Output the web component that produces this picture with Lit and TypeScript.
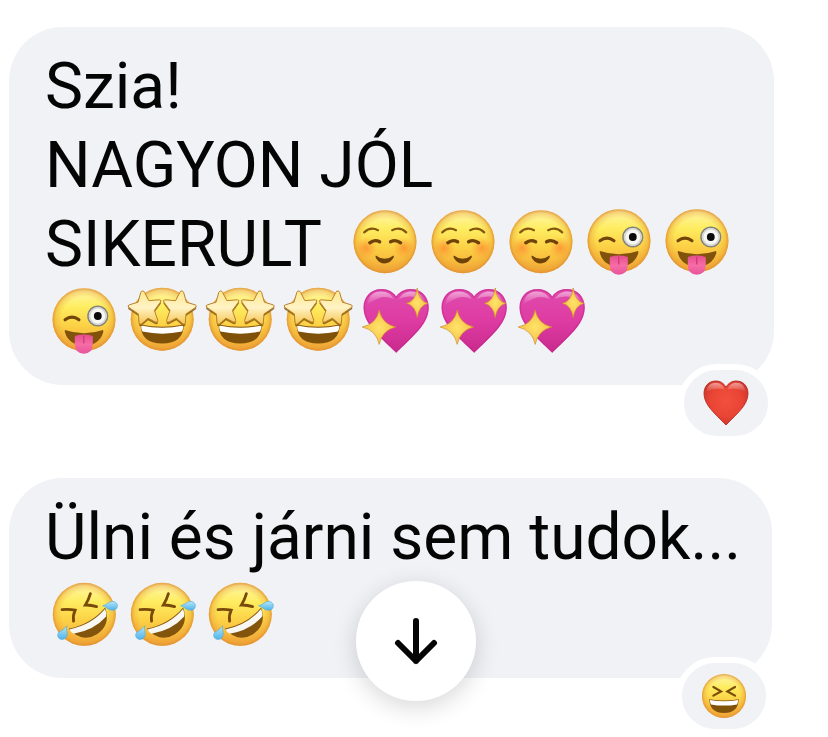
import { LitElement, html, css, svg } from "lit";
import { customElement } from "lit/decorators.js";

const face = (cx: number, cy: number, r: number) => svg`
  <circle cx=${cx} cy=${cy} r=${r} fill="url(#skin)" />
  <circle cx=${cx} cy=${cy} r=${r} fill="url(#rim)" />`;

const star = svg`
  <path d="M19.2 9 Q20.8 8.6 21.6 10.4 L25.8 18.6 L36.4 17.8 Q39 18.2 37.4 20.2 L31.4 28.4 L34.8 38.4 Q34.8 41 32.2 40 L25 36.2 L18.4 42 Q16 43.2 16 40.4 L15.4 32 L5.8 25.4 Q4 23.6 6.4 22.8 L15 20.2 L17.8 10.4 Q18.2 9.2 19.2 9Z"/>`;

const spark = svg`
  <path d="M22.2 28 Q25 42 38.8 45 Q25 48.4 22.2 62.4 Q19.4 48.4 5.2 45 Q19.4 42 22.2 28Z"/>
  <path d="M60.2 6 Q62 19.6 71 21.3 Q62 23.6 60.2 35.6 Q58.4 23.6 49.4 21.3 Q58.4 19.6 60.2 6Z"/>`;

const glyphs = {
  "☺️": svg`
    ${face(39, 38.7, 31.5)}
    <circle cx="20" cy="45" r="11" fill="url(#blush)"/>
    <circle cx="58" cy="45" r="11" fill="url(#blush)"/>
    <g fill="none" stroke="#85560f" stroke-linecap="round">
      <path stroke-width="2.2" d="M18.2 29.4 Q24.5 23.2 32 27.2 M46.2 27.2 Q54 23.2 60.2 29.4"/>
      <path stroke="#6f4208" stroke-width="3.4" d="M23.8 39.8 Q28.6 36 33.6 38.8 M44.6 38.8 Q49.6 36 54.6 39.8"/>
    </g>
    <path fill="#6f4208" d="M29.8 52.4 Q38.6 59 47.6 52.4 Q48.4 53.4 47.2 55.2 Q43.6 60.4 38.6 60.4 Q33.4 60.4 30.2 55.4 Q29 53.2 29.8 52.4Z"/>`,
  "😜": svg`
    ${face(39, 37.7, 31.5)}
    <path fill="none" stroke="#744508" stroke-width="3" stroke-linecap="round" d="M20 37.8 Q27 32.4 34 37.8"/>
    <circle cx="52.8" cy="34" r="9.8" fill="#f7f7f3" stroke="#84847a" stroke-width="1.6"/>
    <circle cx="52.8" cy="34" r="8.2" fill="none" stroke="#d5d6d1" stroke-width="1.6"/>
    <circle cx="52.8" cy="34" r="3.9" fill="#0b0b0b"/>
    <path fill="#80520c" d="M20 48 Q39 54.6 58 48 Q58.6 48.6 58.2 50.4 Q54 63.4 39 63.4 Q24 63.4 20 50.6 Q19.4 48.6 20 48Z"/>
    <path fill="url(#tongue)" d="M29.8 54 Q38.8 51.2 47.8 54 V62.6 Q47.4 71.8 38.8 71.8 Q30.2 71.8 29.8 62.6Z"/>
    <path fill="none" stroke="#cf3475" stroke-width="1.2" stroke-linecap="round" d="M38.8 54 V61"/>`,
  "🤩": svg`
    ${face(39.2, 37.2, 31.5)}
    <path fill="#805109" d="M17.6 42.6 Q39.2 47 60.8 42.6 Q60.6 61.6 39.2 61.6 Q17.8 61.6 17.6 42.6Z"/>
    <path fill="#fff" d="M18.2 43.6 Q39.2 48 60.2 43.6 Q60.4 47 59 49.6 Q39.2 53.8 19.4 49.6 Q18 47 18.2 43.6Z"/>
    <g fill="#7d4c05" opacity=".75" transform="translate(0 2)">${star}<g transform="translate(78.4 0) scale(-1 1)">${star}</g></g>
    <g fill="url(#star)" stroke="#b97f2a" stroke-width="1">${star}<g transform="translate(78.4 0) scale(-1 1)">${star}</g></g>`,
  "💖": svg`
    <path fill="url(#pink)" d="M39.2 14.6 C43 8.6 49 7 54 7 C64.6 7 71.8 15 71.8 25.4 C71.8 42 56 54 39.2 70.8 C22.4 54 6.5 42 6.5 25.4 C6.5 15 13.8 7 24.2 7 C29.4 7 35.4 8.6 39.2 14.6Z"/>
    <path fill="none" stroke="#c1268a" stroke-opacity=".55" stroke-width="1.2" d="M39.2 15.4 C43 9.4 49 7.8 54 7.8 C64 7.8 71 15.4 71 25.4 C71 41.6 55.6 53.4 39.2 69.8 C22.8 53.4 7.3 41.6 7.3 25.4 C7.3 15.4 14.2 7.8 24.2 7.8 C29.4 7.8 35.4 9.4 39.2 15.4Z"/>
    <path fill="url(#shine)" d="M10.4 23 C11 14 17 9.6 24 9.6 C30 9.6 34.4 12.4 36.6 17 Q28 13.4 21 16.4 Q14 19 10.4 23Z M42 17 C44.4 12 49.6 9.6 54 9.6 C61 9.6 67 14 68 23 Q62 16 55 14.6 Q48 13.8 42 17Z"/>
    <g fill="url(#gold)" stroke="#cf8d2e" stroke-width=".7">${spark}</g>`,
  "🤣": svg`
    ${face(39.3, 39.3, 31.5)}
    <g fill="none" stroke="#79490a" stroke-width="2.8" stroke-linecap="round" stroke-linejoin="miter">
      <path d="M17 34.6 Q24 33.8 30.2 35.2 Q27.6 40.4 28.6 46.2"/>
      <path d="M45.4 18.6 Q43.4 25.4 40.4 30 Q46 29.8 51.6 31.6"/>
    </g>
    <path fill="#83540c" d="M23.6 53.8 Q46 49.4 60.2 32.6 Q66 50.4 52 59.2 Q37.4 68.4 23.6 53.8Z"/>
    <path fill="#f8f7f1" d="M24.4 54.4 Q46.4 50 60 34 Q62 38 61.2 41.6 Q49 55.4 28.6 58.8 Q26 57.4 24.4 54.4Z"/>
    <path fill="url(#tear)" stroke="#51a9d9" stroke-width=".6" d="M57.6 30.8 Q61.6 29.6 64.6 27.2 Q69.6 24.8 72.2 29.2 Q73.2 34 68.6 35.2 Q64 35.6 61.4 32.8 Q59.8 31.4 57.6 30.8Z"/>
    <path fill="url(#tear)" stroke="#51a9d9" stroke-width=".6" d="M21.6 50.8 Q21.2 54.4 22.2 58 Q22.4 63.8 17.2 64.6 Q12.6 64.2 12.6 59.6 Q13 57 16.4 55.6 Q19.4 54 21.6 50.8Z"/>`,
} as const;

type Emoji = keyof typeof glyphs;

const redHeart = html`<svg class="mini" viewBox="0 0 46 46" role="img" aria-label="❤️">
  <path fill="url(#red)" stroke="#b62d24" stroke-width=".9" d="M23 7.4 C25.4 2.6 29.6 1 33.2 1 C40.4 1 45 6.4 45 13.6 C45 25 34 33.6 23 45 C12 33.6 1 25 1 13.6 C1 6.4 5.6 1 12.8 1 C16.6 1 20.6 2.6 23 7.4Z"/>
  <path fill="url(#shine)" d="M3.4 12 C4 5.6 8 2.8 12.8 2.8 C17 2.8 20.4 5.6 21.4 9.6 Q12 7 3.4 12Z M24.6 9.6 C26 5 29.4 2.8 33.2 2.8 C38.4 2.8 42 6 42.6 12 Q34 7 24.6 9.6Z"/>
</svg>`;

const laughing = html`<svg class="mini" viewBox="0 0 46 46" role="img" aria-label="😆">
  ${face(23, 23, 22)}
  <path fill="none" stroke="#7a4c0a" stroke-width="2.2" stroke-linecap="round" d="M12.4 14 L20 18.4 L12.4 22.6 M34 14 L26.4 18.4 L34 22.6"/>
  <path fill="#80520a" d="M8.2 26.2 Q23 28.8 37.8 26.2 Q37.2 40 23 40 Q8.8 40 8.2 26.2Z"/>
  <path fill="#fff" d="M8.8 27 Q23 29.6 37.2 27 Q37.2 29.8 36 31.4 Q23 33.8 10 31.4 Q8.8 29.8 8.8 27Z"/>
</svg>`;

const paints = html`<svg class="paints" aria-hidden="true">
  <defs>
    <linearGradient id="skin" x1="0" y1="0" x2="0" y2="1">
      <stop offset="0" stop-color="#fff6ae"/><stop offset=".3" stop-color="#feed60"/>
      <stop offset=".6" stop-color="#fcd045"/><stop offset="1" stop-color="#f2a636"/>
    </linearGradient>
    <radialGradient id="rim">
      <stop offset=".72" stop-color="#e79a33" stop-opacity="0"/>
      <stop offset=".9" stop-color="#e79a33" stop-opacity=".35"/>
      <stop offset="1" stop-color="#de8e33" stop-opacity=".85"/>
    </radialGradient>
    <radialGradient id="blush">
      <stop offset="0" stop-color="#fb7b2d" stop-opacity=".65"/><stop offset="1" stop-color="#fb8b2d" stop-opacity="0"/>
    </radialGradient>
    <linearGradient id="tongue" x1="0" y1="0" x2="0" y2="1">
      <stop offset="0" stop-color="#e44d8c"/><stop offset=".5" stop-color="#f76da6"/><stop offset="1" stop-color="#e6539a"/>
    </linearGradient>
    <linearGradient id="star" x1="0" y1="0" x2="0" y2="1">
      <stop offset="0" stop-color="#ffe98e"/><stop offset=".5" stop-color="#fff3c6"/><stop offset="1" stop-color="#f5c54c"/>
    </linearGradient>
    <linearGradient id="pink" x1="0" y1="0" x2="0" y2="1">
      <stop offset="0" stop-color="#e04bad"/><stop offset=".5" stop-color="#de3ba3"/><stop offset="1" stop-color="#c92a8c"/>
    </linearGradient>
    <linearGradient id="shine" x1="0" y1="0" x2="0" y2="1">
      <stop offset="0" stop-color="#fff" stop-opacity=".5"/><stop offset="1" stop-color="#fff" stop-opacity="0"/>
    </linearGradient>
    <radialGradient id="gold">
      <stop offset="0" stop-color="#ffe36a"/><stop offset="1" stop-color="#f6c044"/>
    </radialGradient>
    <linearGradient id="tear" x1="0" y1="0" x2="0" y2="1">
      <stop offset="0" stop-color="#b5e6fb"/><stop offset="1" stop-color="#4fb4ea"/>
    </linearGradient>
    <radialGradient id="red" cx=".5" cy=".45" r=".6">
      <stop offset="0" stop-color="#f2513f"/><stop offset=".6" stop-color="#e94434"/><stop offset="1" stop-color="#c8332a"/>
    </radialGradient>
  </defs>
</svg>`;

interface Line {
  text?: string;
  emoji?: Emoji[];
}

const first: Line[] = [
  { text: "Szia!" },
  { text: "NAGYON JÓL" },
  { text: "SIKERULT", emoji: ["☺️", "☺️", "☺️", "😜", "😜"] },
  { emoji: ["😜", "🤩", "🤩", "🤩", "💖", "💖", "💖"] },
];

const second: Line[] = [
  { text: "Ülni és járni sem tudok..." },
  { emoji: ["🤣", "🤣", "🤣"] },
];

@customElement("app-root")
export class AppRoot extends LitElement {
  static styles = css`
    :host {
      display: block;
      box-sizing: border-box;
      min-height: 100vh;
      padding: 27px 54px 0 9px;
      background: #fff;
      color: #050505;
      font-family: Roboto, "Liberation Sans", sans-serif;
      font-size: 64px;
      line-height: 79px;
    }
    .paints {
      position: absolute;
      width: 0;
      height: 0;
    }
    .thread {
      display: flex;
      flex-direction: column;
      gap: 93px;
    }
    .bubble {
      position: relative;
      padding: 20px 36px 22px;
      border-radius: 54px;
      background: #f1f2f6;
    }
    .short {
      margin-right: 2px;
    }
    .line {
      display: flex;
      gap: 24px;
      white-space: nowrap;
    }
    .run {
      display: flex;
    }
    .emoji {
      display: block;
      width: 78px;
      height: 79px;
    }
    .reaction {
      position: absolute;
      right: 0;
      bottom: -57px;
      display: flex;
      align-items: center;
      justify-content: center;
      box-sizing: border-box;
      width: 96px;
      height: 78px;
      padding: 0;
      border: 6px solid #fff;
      border-radius: 39px;
      background: #f1f2f6;
    }
    .mini {
      display: block;
      width: 46px;
      height: 46px;
    }
    .down {
      position: fixed;
      left: calc(50% - 58px);
      bottom: 36px;
      display: flex;
      align-items: center;
      justify-content: center;
      width: 120px;
      height: 120px;
      padding: 0;
      border: 0;
      border-radius: 50%;
      background: #fff;
      box-shadow: 0 6px 24px rgba(0, 0, 0, 0.16);
    }
    .arrow {
      width: 48px;
      height: 48px;
      fill: none;
      stroke: #050505;
      stroke-width: 6;
      stroke-linecap: round;
      stroke-linejoin: round;
    }
  `;

  private line({ text, emoji }: Line) {
    return html`<div class="line">
      ${text ? html`<span>${text}</span>` : ""}
      ${emoji
        ? html`<span class="run">${emoji.map(
            (e) => html`<svg class="emoji" viewBox="0 2 78 79" role="img" aria-label=${e}>${glyphs[e]}</svg>`
          )}</span>`
        : ""}
    </div>`;
  }

  render() {
    return html`
      ${paints}
      <main class="thread">
        <article class="bubble">
          ${first.map((l) => this.line(l))}
          <button class="reaction">${redHeart}</button>
        </article>
        <article class="bubble short">
          ${second.map((l) => this.line(l))}
          <button class="reaction">${laughing}</button>
        </article>
      </main>
      <button class="down" aria-label="Scroll to bottom">
        <svg class="arrow" viewBox="0 0 48 48"><path d="M24 4V44M6 26L24 44L42 26"/></svg>
      </button>
    `;
  }
}
